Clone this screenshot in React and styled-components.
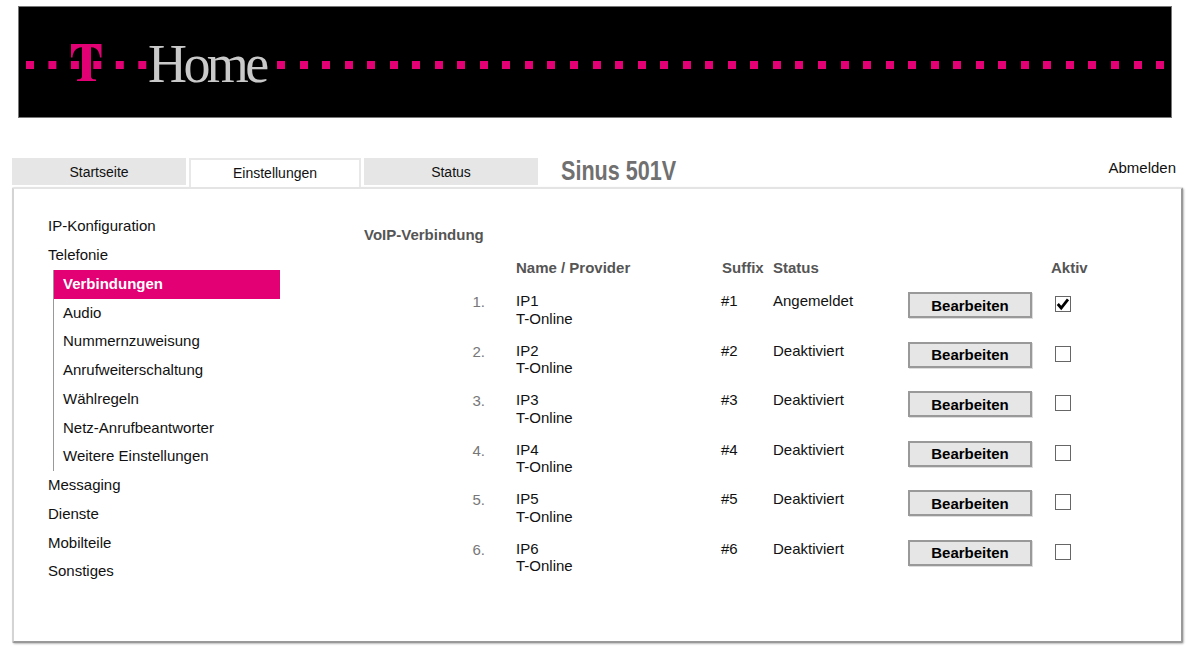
import React from "react";
import styled, { createGlobalStyle } from "styled-components";

const navBefore = ["IP-Konfiguration", "Telefonie"];
const navSub = [
  "Verbindungen",
  "Audio",
  "Nummernzuweisung",
  "Anrufweiterschaltung",
  "Wählregeln",
  "Netz-Anrufbeantworter",
  "Weitere Einstellungen",
];
const navAfter = ["Messaging", "Dienste", "Mobilteile", "Sonstiges"];

const connections = [
  { name: "IP1", status: "Angemeldet", active: true },
  { name: "IP2", status: "Deaktiviert" },
  { name: "IP3", status: "Deaktiviert" },
  { name: "IP4", status: "Deaktiviert" },
  { name: "IP5", status: "Deaktiviert" },
  { name: "IP6", status: "Deaktiviert" },
];

const logoDots = [26, 48.4, 70.9, 93.3, 115.8, 138.3];

const App = () => {
  return (
    <Page>
      <GlobalStyle />
      <Banner>
        <LogoRow>
          <LogoMark viewBox="26 43 121 39">
            {logoDots.map((x) => (
              <rect key={x} x={x} y="61" width="8" height="8" />
            ))}
            <path d="M71 44H101.5V57.5H100C99.5 51.5 97 47.8 91.5 47.3H91V76C91 78.5 92 79.2 96 79.4V81H77V79.4C81 79.2 82 78.5 82 76V47.3H81.5C76 47.8 73 51.5 72.5 57.5H71Z" />
          </LogoMark>
          <HomeText>Home</HomeText>
          <DotRow />
        </LogoRow>
      </Banner>

      <TabBar>
        <Tab>Startseite</Tab>
        <Tab $active>Einstellungen</Tab>
        <Tab>Status</Tab>
        <Model>Sinus 501V</Model>
        <Logout>Abmelden</Logout>
      </TabBar>

      <Panel>
        <Sidebar>
          {navBefore.map((item) => (
            <NavItem key={item}>{item}</NavItem>
          ))}
          <SubNav>
            {navSub.map((item, i) => (
              <SubItem key={item} $active={i === 0}>
                {item}
              </SubItem>
            ))}
          </SubNav>
          {navAfter.map((item) => (
            <NavItem key={item}>{item}</NavItem>
          ))}
        </Sidebar>

        <Main>
          <Heading>VoIP-Verbindung</Heading>
          <HeaderRow>
            <span />
            <ColHead>Name / Provider</ColHead>
            <ColHead $shift={1}>Suffix</ColHead>
            <ColHead>Status</ColHead>
            <span />
            <ColHead $shift={-5}>Aktiv</ColHead>
          </HeaderRow>
          {connections.map((c, i) => (
            <Row key={c.name}>
              <Num>{i + 1}.</Num>
              <Name>
                <div>{c.name}</div>
                <div>T-Online</div>
              </Name>
              <Cell>#{i + 1}</Cell>
              <Cell>{c.status}</Cell>
              <EditButton>Bearbeiten</EditButton>
              <CheckBox>
                {c.active && (
                  <svg width="14" height="14" viewBox="0 0 14 14">
                    <path
                      d="M1.8 7L5.2 11L12 2.4"
                      fill="none"
                      stroke="#000"
                      strokeWidth="2.8"
                    />
                  </svg>
                )}
              </CheckBox>
            </Row>
          ))}
        </Main>
      </Panel>
    </Page>
  );
};

export default App;

const GlobalStyle = createGlobalStyle`
  html, body {
    margin: 0;
    background: #fff;
  }
  body {
    font-family: "Liberation Sans", Arial, sans-serif;
    font-size: 15px;
    color: #111;
  }
`;

const Page = styled.div`
  width: 1196px;
  height: 660px;
  overflow: hidden;
  padding: 6px 0 0 12px;
  box-sizing: border-box;
`;

const Banner = styled.div`
  width: 1154px;
  height: 112px;
  margin-left: 6px;
  box-sizing: border-box;
  background: #000;
  border: 1px solid #777;
  overflow: hidden;
  display: flex;
  align-items: flex-start;
`;

const LogoRow = styled.div`
  display: flex;
  align-items: center;
  height: 39px;
  padding-left: 7px;
  margin-top: 36px;
`;

const LogoMark = styled.svg`
  flex: none;
  width: 121px;
  height: 39px;
  fill: #e20074;
`;

const HomeText = styled.span`
  flex: none;
  width: 129px;
  margin: 4px 0 0 1px;
  font-family: "Liberation Serif", "Times New Roman", serif;
  font-size: 54px;
  line-height: 39px;
  color: #c9c9c9;
  letter-spacing: -3.6px;
`;

const DotRow = styled.span`
  display: block;
  flex: none;
  width: 896px;
  height: 8px;
  margin-top: 5px;
  background: repeating-linear-gradient(
    90deg,
    #e20074 0,
    #e20074 8px,
    transparent 8px,
    transparent 22.54px
  );
`;

const TabBar = styled.div`
  display: flex;
  align-items: flex-end;
  height: 29px;
  margin-top: 40px;
  position: relative;
  z-index: 1;
`;

const Tab = styled.div`
  width: ${(p) => (p.$active ? "172px" : "174px")};
  height: ${(p) => (p.$active ? "29px" : "27px")};
  margin: ${(p) => (p.$active ? "0 3px" : "0 0 2px")};
  padding-bottom: ${(p) => (p.$active ? "2px" : 0)};
  box-sizing: border-box;
  display: flex;
  align-items: center;
  justify-content: center;
  font-size: 14px;
  background: ${(p) => (p.$active ? "#fff" : "#e6e6e6")};
  border: ${(p) => (p.$active ? "2px solid #e8e8e8" : "none")};
  border-bottom: none;
`;

const Model = styled.div`
  margin: 0 0 0 23px;
  height: 29px;
  line-height: 27px;
  font-weight: 700;
  font-size: 27px;
  color: #707070;
  white-space: nowrap;
  transform: scaleX(0.8);
  transform-origin: left center;
`;

const Logout = styled.div`
  margin-left: auto;
  margin-right: 20px;
  align-self: flex-start;
  line-height: 20px;
`;

const Panel = styled.div`
  width: 1171px;
  height: 456px;
  box-sizing: border-box;
  display: flex;
  background: #fff;
  border-top: 2px solid #e4e4e4;
  border-left: 2px solid #d4d4d4;
  border-right: 2px solid #999;
  border-bottom: 2px solid #999;
  box-shadow: 1px 1px 2px #bbb;
  border-radius: 2px;
`;

const Sidebar = styled.nav`
  width: 350px;
  flex: none;
  box-sizing: border-box;
  padding: 23.3px 0 0 34px;
`;

const NavItem = styled.div`
  height: 28.75px;
  line-height: 28.75px;
`;

const SubNav = styled.div`
  margin-left: 5px;
  width: 226px;
  border-left: 1px solid #999;
`;

const SubItem = styled.div`
  height: 28.75px;
  line-height: 28.75px;
  padding-left: 9px;
  font-weight: ${(p) => (p.$active ? 700 : 400)};
  background: ${(p) => (p.$active ? "#e20074" : "transparent")};
  color: ${(p) => (p.$active ? "#fff" : "#111")};
`;

const Main = styled.main`
  flex: 1;
  padding-top: 36px;
`;

const Heading = styled.div`
  font-weight: 700;
  color: #555;
  line-height: 20px;
  height: 33px;
`;

const HeaderRow = styled.div`
  display: grid;
  grid-template-columns: 152px 205px 52px 135px 124px 1fr;
  line-height: 20px;
  height: 34px;
`;

const ColHead = styled.div`
  font-weight: 700;
  color: #555;
  margin-left: ${(p) => p.$shift || 0}px;
  padding-left: ${(p) => (p.$shift === -5 ? "24px" : 0)};
`;

const Row = styled.div`
  display: grid;
  grid-template-columns: 121px 236px 52px 135px 124px 1fr;
  height: 49.5px;
`;

const Num = styled.div`
  text-align: right;
  color: #777;
  line-height: 18px;
  padding-top: 1px;
`;

const Name = styled.div`
  padding-left: 31px;
  line-height: 17.5px;
`;

const Cell = styled.div`
  line-height: 18px;
`;

const EditButton = styled.button`
  width: 124px;
  height: 26px;
  margin-top: 0;
  padding: 0;
  box-sizing: border-box;
  background: #e6e6e6;
  border: 2px solid #999;
  border-radius: 0;
  box-shadow: 1px 1px 0 #ddd;
  font-family: inherit;
  font-size: 15px;
  font-weight: 700;
  color: #000;
`;

const CheckBox = styled.div`
  width: 16px;
  height: 16px;
  margin: 4px 0 0 23px;
  box-sizing: border-box;
  border: 1px solid #666;
  background: #fff;
  display: flex;
  align-items: center;
  justify-content: center;
`;
